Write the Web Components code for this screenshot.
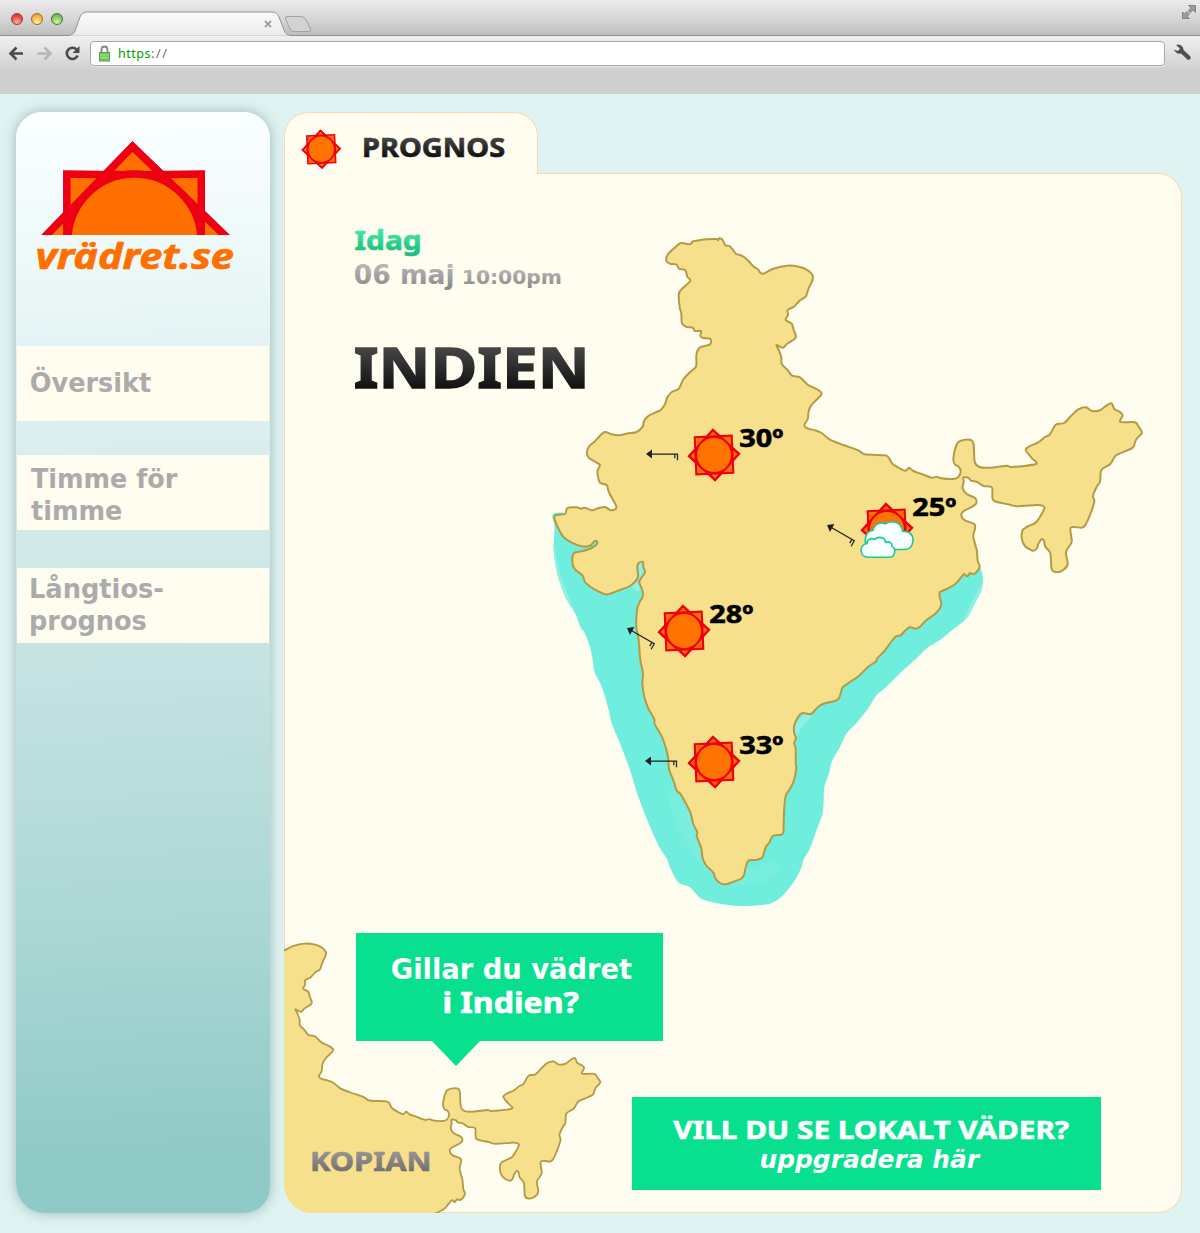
<!DOCTYPE html>
<html lang="sv">
<head>
<meta charset="utf-8">
<title>vrädret.se</title>
<style>
  html, body { margin: 0; }
  body { width: 1200px; height: 1233px; overflow: hidden; background: #dff3f2; font-family: "DejaVu Sans", sans-serif; }
</style>
</head>
<body>
<weather-page></weather-page>
<script>
const define = (name, html, setup) => {
  const tpl = document.createElement('template');
  tpl.innerHTML = html;
  customElements.define(name, class extends HTMLElement {
    connectedCallback() {
      if (this.shadowRoot) return;
      this.attachShadow({ mode: 'open' }).append(tpl.content.cloneNode(true));
      if (setup) setup(this, this.shadowRoot);
    }
  });
};

/* One line of lettering whose ink fills exactly `width` pixels; the box bottom is the baseline.
   The last value of a face is the extra weight, as a share of the font size. */
const FACES = {
  wide: ['"DejaVu Sans"', 700, 'normal', 0],
  wideItalic: ['"DejaVu Sans"', 700, 'italic', 0],
  serifI: ['"Noto Sans"', 700, 'normal', .024],
  brand: ['"Noto Sans"', 700, 'italic', .02]
};
const TONES = {
  ink: ['#484848', '#0c0c0c'], green: ['#44e6a4', '#1fbd80'],
  grey: ['#b9b6b7', '#8f8e8e'], stone: ['#9a9596', '#716d6e']
};
const pen = document.createElement('canvas').getContext('2d');
define('fit-text', `<style>
  :host { display: block; flex: none; }
  svg { display: block; width: 100%; height: 100%; overflow: visible; }
</style><svg><defs><linearGradient id="g" gradientUnits="userSpaceOnUse" x1="0" x2="0"><stop offset="0"/><stop offset="1"/></linearGradient></defs><text></text></svg>`, (el, root) => {
  const size = +el.getAttribute('size'), width = +el.getAttribute('width');
  const [family, weight, style, extra] = FACES[el.getAttribute('face') || 'wide'];
  const label = el.getAttribute('label');
  el.style.width = width + 'px';
  el.style.height = size + 'px';
  pen.font = `${style} ${weight} ${size * 10}px ${family}, sans-serif`;
  const m = pen.measureText(label);
  const half = size * extra / 2;
  const left = m.actualBoundingBoxLeft / 10 + half;
  const sx = width / (left + m.actualBoundingBoxRight / 10 + half);
  const t = root.querySelector('text');
  t.textContent = label;
  t.setAttribute('transform', `translate(${left * sx} ${size}) scale(${sx} 1)`);
  t.setAttribute('style', `font:${style} ${weight} ${size}px ${family},sans-serif`);
  const tone = TONES[el.getAttribute('tone')];
  let paint = 'currentColor';
  if (tone) {
    const g = root.querySelector('#g');
    g.setAttribute('y1', -size * .75); g.setAttribute('y2', size * .08);
    g.children[0].setAttribute('stop-color', tone[0]);
    g.children[1].setAttribute('stop-color', tone[1]);
    paint = 'url(#g)';
  }
  t.setAttribute('fill', paint);
  if (extra) { t.setAttribute('stroke', paint); t.setAttribute('stroke-width', half * 2); }
});

define('sun-icon', `<style>
  :host { display: block; width: 54px; height: 54px; }
  svg { display: block; width: 100%; height: 100%; overflow: visible; }
</style>
<svg viewBox="-27 -27 54 54"><g transform="rotate(-2.5)" fill="#ff7300" stroke="#ee0011" stroke-width="2.1">
  <path d="M0-25L25 0 0 25-25 0Z"/><rect x="-18.5" y="-18.5" width="37" height="37"/>
  <path d="M0-25L25 0 0 25-25 0Z" fill="none"/><circle r="18"/></g></svg>`);

define('cloud-icon', `<style>
  :host { display: block; width: 54px; height: 38px; }
  svg { display: block; width: 100%; height: 100%; overflow: visible; }
</style>
<svg viewBox="860 520 54 38"><g fill="#f8ffff" stroke="#1cc896" stroke-width="1.6" stroke-linejoin="round">
  <path d="M868 549C863 541 865 531 873 530.500C874 523.500 881 521.500 885.500 524C891 519.500 901.500 521.500 902.500 531.500C910 530.500 914 536 912.800 542C912 547.500 908 549.500 904 549.500H880Z"/>
  <path d="M868 557.200C859 557.200 859 544.500 867 543.500C866.500 539.500 871.500 537.500 874.500 539.500C878.500 535.500 885.500 537.500 885.500 542.500C889.500 540.500 892.500 543.500 892 546.500C896.500 548.500 895.500 557.200 889 557.200Z"/></g></svg>`);

define('wind-arrow', `<style>
  :host { display: block; width: 32px; height: 12px; transform-origin: 0 50%; }
  svg { display: block; overflow: visible; }
</style>
<svg width="32" height="12"><path d="M0 6L6 1.500V10.500Z" fill="#222"/><path d="M5 6H31.500V12.300M28.800 6V10.300" fill="none" stroke="#222" stroke-width="1.250"/></svg>`,
  el => { if (el.hasAttribute('turn')) el.style.transform = `rotate(${el.getAttribute('turn')}deg)`; });

define('weather-pin', `<style>
  :host { position: absolute; display: block; color: #000; }
  sun-icon { position: absolute; left: -27px; top: -27px; }
  cloud-icon { position: absolute; left: -27px; top: -8.500px; }
  .temp { position: absolute; left: 26px; top: -34px; }
  :host([cloudy]) .temp { top: -38.500px; }
</style>
<sun-icon></sun-icon><div class="temp"></div>`, (el, root) => {
  el.style.left = el.getAttribute('x') - 284 + 'px';
  el.style.top = el.getAttribute('y') - 173 + 'px';
  root.querySelector('.temp').innerHTML = `<fit-text face="serifI" size="25.500" width="43" label="${el.getAttribute('temp')}"></fit-text>`;
  if (el.hasAttribute('cloudy')) root.querySelector('sun-icon').after(document.createElement('cloud-icon'));
});

/* Outline surveyed on tiles: origin in pixels, points in thirds of a pixel. */
const tile = (ox, oy, s) => {
  const n = s.trim().split(/[\s,]+/).map(Number), out = [];
  for (let i = 0; i < n.length; i += 2) out.push([ox + n[i] / 3, oy + n[i + 1] / 3]);
  return out;
};
const smooth = p => {
  const n = p.length, at = i => p[(i + n) % n], f = v => v.toFixed(1), k = 7;
  let d = `M${f(p[0][0])} ${f(p[0][1])}`;
  for (let i = 0; i < n; i++) {
    const a = at(i - 1), b = at(i), c = at(i + 1), e = at(i + 2);
    d += `C${f(b[0] + (c[0] - a[0]) / k)} ${f(b[1] + (c[1] - a[1]) / k)} ${f(c[0] - (e[0] - b[0]) / k)} ${f(c[1] - (e[1] - b[1]) / k)} ${f(c[0])} ${f(c[1])}`;
  }
  return d + 'Z';
};
const LAND = smooth([
  ...tile(640, 220, `12,603 25,588 45,578 62,570 75,553 82,532 95,516 115,508 122,495 130,478 148,458 168,440 169,410 172,393 182,381 207,375 213,368 210,356 190,354 181,348 183,333 165,333 158,323 140,321 126,310 124,280 119,262 117,220 130,203 151,182 142,170 136,151 117,146 109,133 90,131 79,122 83,104 102,85 122,69 150,73 160,64 200,58 230,57 234,61 238,55 248,60 256,76 268,78 276,86 288,101 305,107 322,119 340,139 354,148 360,157 370,161 400,146 440,137 480,141 505,152 518,167 517,182 505,208 497,230 480,241 462,260 443,270 444,285 437,300 455,311 461,330 468,348 463,358 443,370 430,383 420,380 409,375 417,392 424,412 425,432 442,449 456,467 480,472 503,494 530,507 545,520 535,534 515,554 506,573 503,597`),
  ...tile(790, 390, `43,106 55,116 75,121 95,129 120,149 160,165 205,181 225,193 285,196 298,205 308,222 345,242 357,233 370,243 395,252 425,263 440,260 455,265 490,267 505,261 512,243 505,229 495,224 490,207 496,175 505,156 525,149 545,151 551,165 554,215 568,231 600,233 650,227 665,231 738,222 725,204 707,180 720,168 745,157 765,141 780,133 797,104 822,99 845,76 865,58 888,52 905,63 930,61 950,46 965,40 973,57 990,66 998,76 991,96 1035,97 1047,112 1056,128 1038,149 1030,171 1010,182 978,196 960,223 934,240 930,275 920,290 909,318 913,335 900,375 886,405 875,413 842,413 845,455 828,485 833,522 820,540 800,547 785,538 781,490 766,470 762,452 754,448 745,462 740,476 728,482 705,468 695,445 698,420 712,410 740,395 763,356 757,347 740,345 680,349 655,343 610,331 606,293 580,288 562,276 543,272 536,264 520,262 521,275 518,295 530,312 555,324 559,340 545,351 520,364 514,377 525,391 553,402 555,415 550,440 560,480 563,512`),
  ...tile(740, 560, `719,20 708,38 697,42 690,39 682,49 672,42 660,56 645,73 620,87 600,96 599,110 604,130 598,148 580,166 560,179 540,200 527,206 511,202 497,210 482,226 467,230 455,243 435,271 411,296 409,304 385,320 357,347 330,366 308,382 302,400 296,416 285,423 255,430 235,440 213,462 187,459 172,475 162,500 163,520 168,535 162,550 167,565 167,610 169,625 162,660 153,682 138,705 133,740 131,790 130,818 122,824 98,828 88,848 77,862 67,892 50,899 25,902 17,922 12,945`),
  ...tile(540, 600, `602,837 580,845 558,853 540,849 526,835 520,818 500,798 488,775 484,745 470,708 472,697 460,672 452,640 435,605 420,580 410,572 400,540 388,510 383,465 370,420 360,400 344,372 343,358 325,325 313,290 307,250 309,220 301,180 296,120 289,80 291,30`),
  ...tile(540, 400, `298,608 308,590 307,570 298,548 303,535 315,517 310,500 309,486 297,488 292,500 294,530 285,545 270,558 240,570 204,583 185,579 160,566 135,546 128,527 105,508 97,488 101,460 125,454 155,444 170,433 171,424 163,424 150,437 125,439 95,428 70,410 55,385 43,355 47,345 75,342 82,324 110,322 122,326 135,323 155,331 175,325 195,321 210,330 225,328 229,318 219,300 206,275 200,255 180,248 173,225 173,210 180,195 165,185 148,175 140,160 148,138 165,124 180,107 195,96 215,103 237,106 265,100 290,96 308,80`)
]);
const SEA = smooth([
  ...tile(540, 400, `300,400 120,365 78,345 70,338 42,340 37,352 43,375 42,420 40,440 47,500 60,550 80,600 105,640 125,690`),
  ...tile(540, 600, `130,90 150,140 160,190 163,215 185,260 205,325 215,370 240,430 270,510 295,590 330,680 360,745 380,775 390,802 415,847 450,862 485,897 540,911 610,919 690,911 730,885`),
  ...tile(740, 560, `165,960 185,920 190,900 210,865 230,810 248,760 251,720 253,680 267,640 275,605 300,560 320,520 350,488 385,445 410,405 440,380 480,340 530,295 560,265 600,240 640,208 680,175 705,130 725,90 729,55 725,35 718,18 700,15 600,40 300,100`)
]);

define('india-map', `<style>
  :host { display: block; position: absolute; left: -1px; top: -1px; width: 898px; height: 1040px; }
  svg { display: block; position: absolute; left: 0; top: 0; }
  wind-arrow { position: absolute; }
</style>
<svg width="898" height="1040" viewBox="284 173 898 1040">
  <defs>
    <clipPath id="corner"><path d="M284 930H700V1213H312A28 30 0 0 1 284 1183Z"/></clipPath>
    <clipPath id="water"><path d="${SEA}"/></clipPath>
  </defs>
  <path d="${SEA}" fill="#70eedd"/>
  <g clip-path="url(#water)" fill="none" stroke="#a5f2e4" stroke-opacity=".6">
    <path d="M553 545C558 590 576 610 590 655C598 700 610 740 628 785" stroke-width="3"/>
    <path d="M984 585L966 620" stroke-width="6"/>
    <path d="M640 590L634 584M794 735Q799 722 810 714" stroke-width="7"/>
    <path d="M641 560V578" stroke-width="9"/>
    <path d="M676 795C690 850 725 895 770 870" stroke-width="16" stroke-opacity=".2" stroke-linecap="round"/>
  </g>
  <path d="${LAND}" fill="#f6e08b" stroke="#b39a47" stroke-width="2"/>
  <g clip-path="url(#corner)"><path d="${LAND}" transform="translate(-351.600 722.500) scale(.8335 .832)" fill="#f6e08b" stroke="#b39a47" stroke-width="2.200"/></g>
</svg>
<wind-arrow style="left:362px;top:275px"></wind-arrow>
<wind-arrow style="left:343px;top:448.500px" turn="30"></wind-arrow>
<wind-arrow style="left:361px;top:582px"></wind-arrow>
<wind-arrow style="left:543px;top:345.500px" turn="30"></wind-arrow>
<weather-pin x="714" y="454.500" temp="30º"></weather-pin>
<weather-pin x="684.300" y="631" temp="28º"></weather-pin>
<weather-pin x="714" y="762" temp="33º"></weather-pin>
<weather-pin x="886.500" y="528.500" temp="25º" cloudy></weather-pin>`);

define('browser-bar', `<style>
  :host { display: flex; flex-direction: column; height: 94px; background: #cecece; }
  .tabs { display: flex; height: 36px; align-items: flex-end; background: linear-gradient(#ebebeb, #d5d5d5 55%, #bcbcbc); box-shadow: inset 0 -1px #929292; }
  .lights { display: flex; gap: 8px; padding: 0 0 11px 11px; width: 46px; }
  .lights i { flex: none; width: 10px; height: 10px; border: 1px solid; border-radius: 50%; }
  .tab { width: 262px; height: 26px; flex: none; }
  .grow { flex: 1; }
  .full { margin: 0 3px 16px 0; }
  svg { display: block; }
  .tools { display: flex; align-items: center; height: 34px; padding-bottom: 1px; background: linear-gradient(#f0f0f0, #d0d0d0); }
  .nav { display: flex; width: 90px; }
  .url { display: flex; align-items: center; box-sizing: border-box; width: 1075px; height: 25px; background: #fff; border: 1px solid #a9a9a9; border-radius: 4px; padding-left: 7px; color: #009a00; font: 12.500px "Noto Sans", sans-serif; letter-spacing: .5px; box-shadow: 0 1px #e6e6e6; }
  .url svg { margin-right: 7px; } .url span { color: #6a6a6a; letter-spacing: 1.6px; }
  .wrench { margin-left: 8px; }
</style>
<div class="tabs">
  <div class="lights"><i style="background:radial-gradient(circle at 50% 85%,#ffb0a8,#e94b48 60%,#c43030);border-color:#a03735"></i><i style="background:radial-gradient(circle at 50% 85%,#fff2a0,#f2b545 60%,#d98f28);border-color:#a06b25"></i><i style="background:radial-gradient(circle at 50% 85%,#dcf7a8,#84c75e 60%,#5a9e40);border-color:#49752f"></i></div>
  <svg class="tab" viewBox="57 10 262 26"><defs><linearGradient id="t" x1="0" x2="0" y1="0" y2="1"><stop stop-color="#fafafa"/><stop offset="1" stop-color="#ececec"/></linearGradient></defs>
    <path d="M57 35.500H68Q73 35.500 75 31L80 17Q82 12 87 12H272Q277 12 279 17L284 30Q286 35.500 291 35.500H319" fill="url(#t)" stroke="#929292"/><path d="M70 36H289" stroke="#ededed"/>
    <path d="M265 21L271 27M271 21L265 27" stroke="#a2a2a2" stroke-width="2"/>
    <path d="M287 16.500H301Q304 16.500 305.500 19L310.500 29Q311.500 31.500 308.500 31.500H294Q291 31.500 290 29L285.500 19Q285 16.500 287 16.500Z" fill="#d2d2d2" stroke="#a2a2a2"/></svg>
  <span class="grow"></span>
  <svg class="full" width="16" height="16" viewBox="1181 3 16 16"><path d="M1188.500 4.500H1195.500V11.500L1193 9 1190.500 11.500 1188.500 9.500 1191 7ZM1182.500 11L1184.500 13 1187 10.500 1189.500 13 1187 15.500 1189.500 17.500H1182.500Z" fill="#9b9b9b" stroke="#777" stroke-width=".8"/></svg>
</div>
<div class="tools">
  <svg class="nav" width="90" height="24" viewBox="0 41 90 24" fill="none" stroke-width="2.600">
    <path d="M23 53.500H11M16.500 47.500L10.500 53.500 16.500 59.500" stroke="#4b4b4b"/><path d="M37.500 53.500H50M44.500 47.500L50.500 53.500 44.500 59.500" stroke="#b6b6b6"/>
    <path d="M76.500 49.500A5.600 5.600 0 1 0 77.600 55.500" stroke="#4b4b4b"/><path d="M79.500 46V53H72.500Z" fill="#4b4b4b" stroke="none"/></svg>
  <div class="url"><svg width="13" height="17" viewBox="98 45 13 17"><path d="M101.500 53V50Q101.500 46.500 104.500 46.500T107.500 50V53" fill="none" stroke="#858585" stroke-width="1.800"/><rect x="99.500" y="52.500" width="10" height="8.500" fill="#7cc760" stroke="#529c43"/><path d="M100 55H109M100 57.500H109" stroke="#a5dd8d"/></svg>https<span>://</span></div>
  <svg class="wrench" width="20" height="20" viewBox="1173 44 20 20"><path d="M1176 46Q1180.500 44.500 1183 48.500L1183.500 51 1190.500 57.500Q1191.500 60.500 1188 61L1181 54.500Q1176 55.500 1174 50.500L1178 52 1180 49.500Z" fill="#505050"/></svg>
</div>`);

define('site-logo', `<style>
  :host { display: block; padding: 29px 0 0 21px; color: #ff7000; }
  svg { display: block; margin-left: 4px; }
  fit-text { margin-top: -2px; }
</style>
<svg width="192" height="94" viewBox="41 141 192 94"><defs><clipPath id="h"><path d="M41 141H233V235H41Z"/></clipPath></defs>
  <g clip-path="url(#h)" fill="#ff7000" stroke="#ec0012" stroke-width="7.500">
    <path d="M132.500 146.500L240 250H32Z"/><path d="M66.800 250V174Q133 175.500 201.300 174V250Z"/>
    <path d="M132.500 146.500L240 250H32Z" fill="none"/><circle cx="134.500" cy="240.500" r="66.500"/></g></svg>
<fit-text face="brand" size="36" width="197" label="vrädret.se"></fit-text>`);

define('nav-item', `<style>
  :host { display: flex; flex-direction: column; justify-content: flex-start; gap: 6px; box-sizing: border-box; height: 75px; background: #fffdf0; color: #ababab; }
</style><slot></slot>`);

define('side-bar', `<style>
  :host { display: flex; flex-direction: column; box-sizing: border-box; width: 254px; flex: none; border-radius: 26px 26px 26px 28px / 26px 26px 26px 30px; background: linear-gradient(178deg, #fbffff, #f0fafa 11%, #e2f1f2 24%, #c5e3e2 50%, #a9d6d3 75%, #90cac7 94%, #8ecac7); box-shadow: 0 0 13px rgba(95,125,125,.5); }
  site-logo { height: 205px; }
  nav { display: flex; flex-direction: column; gap: 34px; padding: 0 1px; }
  .last { margin-top: 4px; }
</style>
<site-logo></site-logo>
<nav>
  <nav-item style="padding:20px 0 0 14px"><fit-text size="26" width="120" label="Översikt"></fit-text></nav-item>
  <nav-item style="padding:7px 0 0 14px"><fit-text size="26" width="146.500" label="Timme för"></fit-text><fit-text size="26" width="90.500" label="timme"></fit-text></nav-item>
  <nav-item class="last" style="padding:4px 0 0 13.500px"><fit-text size="26" width="132" label="Långtios-"></fit-text><fit-text size="26" width="115" label="prognos"></fit-text></nav-item>
</nav>`);

define('speech-card', `<style>
  :host { display: flex; flex-direction: column; align-items: center; box-sizing: border-box; width: 307px; height: 108px; padding: 17.500px 0 0 4px; background: #08e08f; color: #fff; position: relative; }
  :host::after { content: ""; position: absolute; left: 75px; top: 107px; border: 25px solid transparent; border-top: 26px solid #08e08f; border-bottom: 0; }
  .second { margin-top: 5px; }
</style>
<fit-text size="28" width="240" label="Gillar du vädret"></fit-text>
<fit-text class="second" face="serifI" size="28.500" width="135" label="i Indien?"></fit-text>`);

define('upgrade-card', `<style>
  :host { display: flex; flex-direction: column; align-items: center; gap: 4.500px; box-sizing: border-box; width: 469px; height: 93px; padding: 15.500px 0 0 8px; background: #08e08f; color: #fff; }
</style>
<fit-text face="serifI" size="25.500" width="396" label="VILL DU SE LOKALT VÄDER?"></fit-text>
<fit-text face="wideItalic" size="25" width="219.500" label="uppgradera här"></fit-text>`);

define('forecast-panel', `<style>
  :host { display: flex; flex-direction: column; width: 898px; flex: none; }
  .tab { display: flex; align-items: flex-start; gap: 22px; box-sizing: border-box; width: 254px; height: 62px; margin-bottom: -1px; position: relative; z-index: 1; padding: 16px 0 0 16px; background: #fffdf0; border: 1px solid #fcd9ad; border-bottom: 0; border-radius: 24px 24px 0 0; }
  .tab sun-icon { width: 40.500px; height: 40.500px; }
  .body { display: flex; flex-direction: column; box-sizing: border-box; flex: 1; position: relative; background: #fffdf0; border: 1px solid #fcd9ad; border-radius: 0 24px 24px 28px / 0 24px 24px 30px; padding: 50px 80px 22px 26px; }
  .head, .foot { position: relative; display: flex; flex-direction: column; }
  .head { padding-left: 43.500px; }
  .tab fit-text { margin-top: 1px; }
  .date { display: flex; align-items: flex-end; gap: 11.500px; margin-top: 8px; }
  h1 { margin: 47px 0 0; font-size: 0; }
  .foot { margin-top: auto; }
  speech-card { margin: 0 0 56px 45px; }
  .row { display: flex; justify-content: space-between; align-items: flex-end; padding-left: .5px; }
  .row > fit-text { margin-bottom: 19.500px; }
</style>
<div class="tab"><sun-icon></sun-icon><fit-text face="serifI" tone="ink" size="26.500" width="140.500" label="PROGNOS"></fit-text></div>
<div class="body">
  <india-map></india-map>
  <div class="head">
    <fit-text face="serifI" tone="green" size="26" width="65" label="Idag"></fit-text>
    <div class="date"><fit-text tone="grey" size="26" width="97.500" label="06 maj"></fit-text><fit-text tone="grey" size="20" width="96.500" label="10:00pm"></fit-text></div>
    <h1><fit-text face="serifI" tone="ink" size="56" width="230.500" label="INDIEN" style="margin-top:1px"></fit-text></h1>
  </div>
  <div class="foot">
    <speech-card></speech-card>
    <div class="row"><fit-text face="serifI" tone="stone" size="27" width="117.500" label="KOPIAN"></fit-text><upgrade-card></upgrade-card></div>
  </div>
</div>`);

define('weather-page', `<style>
  :host { display: flex; flex-direction: column; width: 1200px; height: 1233px; }
  main { display: flex; flex: 1; gap: 14px; padding: 18px 18px 20px 16px; background: #dff3f2; }
</style>
<browser-bar></browser-bar><main><side-bar></side-bar><forecast-panel></forecast-panel></main>`);
</script>
</body>
</html>
